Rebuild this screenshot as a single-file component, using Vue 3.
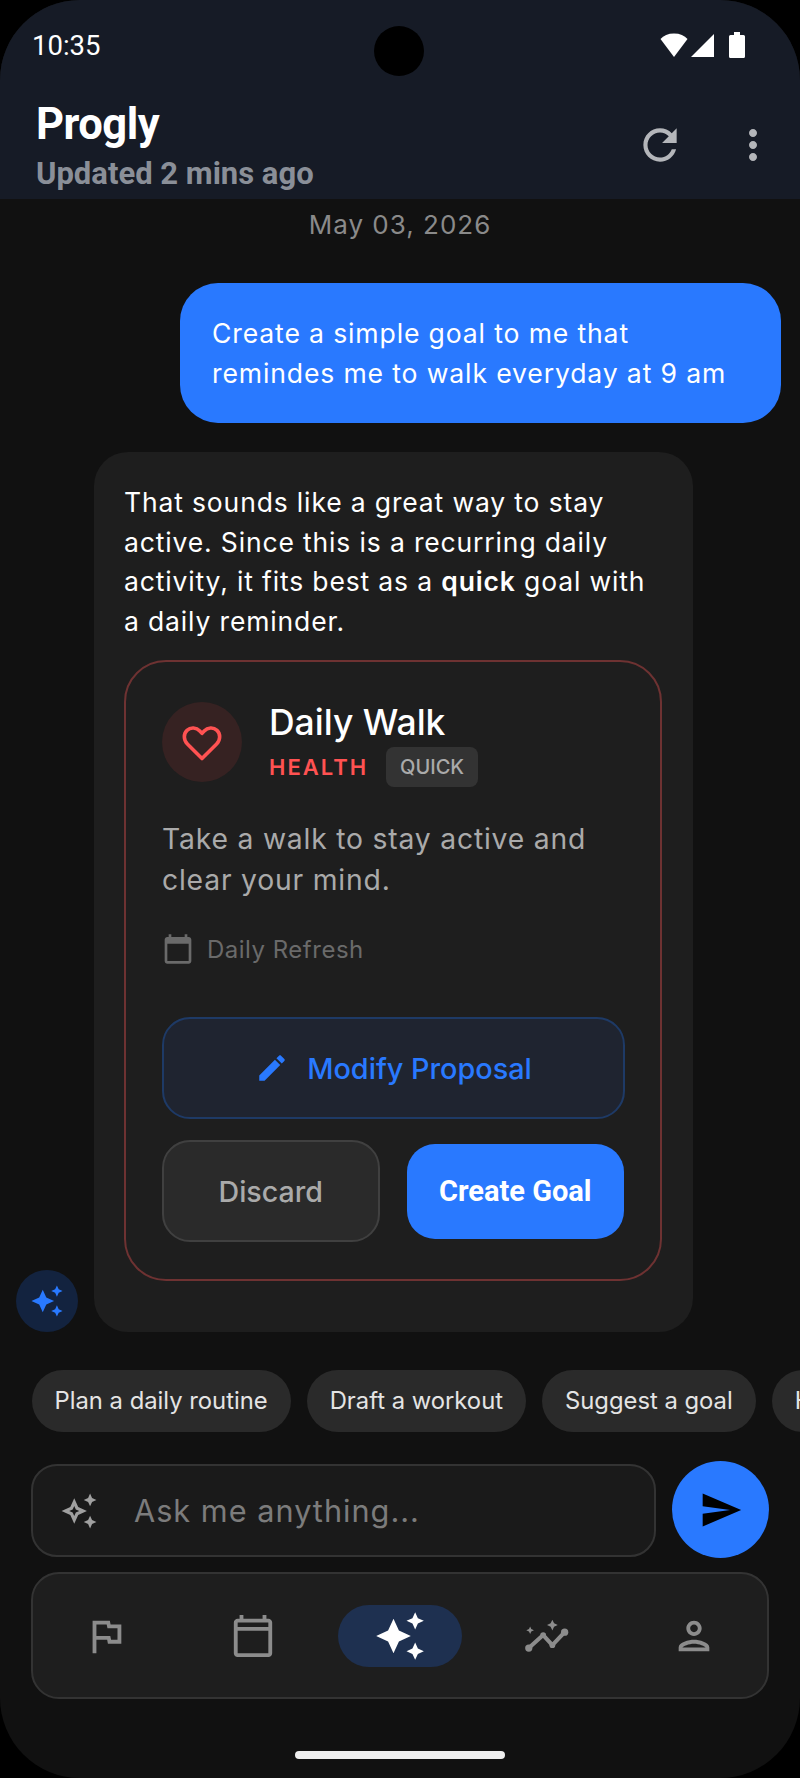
<script setup>
const chips = ['Plan a daily routine', 'Draft a workout', 'Suggest a goal', 'Help me focus']

const sparkle = 'M19 9l1.25-2.75L23 5l-2.75-1.25L19 1l-1.25 2.75L15 5l2.75 1.25L19 9zm-7.5.5L9 4 6.5 9.5 1 12l5.5 2.5L9 20l2.5-5.5L17 12l-5.5-2.5zM19 15l-1.25 2.75L15 19l2.75 1.25L19 23l1.25-2.75L23 19l-2.75-1.25L19 15z'
const sparkleOutline = 'M19 9l1.25-2.75L23 5l-2.75-1.25L19 1l-1.25 2.75L15 5l2.75 1.25zm0 6l-1.25 2.75L15 19l2.75 1.25L19 23l1.25-2.75L23 19l-2.75-1.25zm-7.5-5.5L9 4 6.5 9.5 1 12l5.5 2.5L9 20l2.5-5.5L17 12l-5.5-2.5zm-1.51 3.49L9 15.17l-.99-2.18L5.83 12l2.18-.99L9 8.83l.99 2.18 2.18.99-2.18.99z'
const calendar = 'M20 3h-1V1h-2v2H7V1H5v2H4c-1.1 0-2 .9-2 2v16c0 1.1.9 2 2 2h16c1.1 0 2-.9 2-2V5c0-1.1-.9-2-2-2zm0 18H4V8h16v13z'
const calendarBanded = 'M20 3h-1V1h-2v2H7V1H5v2H4c-1.1 0-2 .9-2 2v16c0 1.1.9 2 2 2h16c1.1 0 2-.9 2-2V5c0-1.1-.9-2-2-2zM4 5h16v2.300H4zM4 9.300h16V21H4z'
</script>

<template>
  <div class="phone">
    <header class="top">
      <div class="camera"></div>

      <div class="status">
        <span class="time">10:35</span>
        <div class="status-icons">
          <svg width="28" height="24" viewBox="0 0 28 24"><path d="M14 24 .5 6C3.500 2.500 8 .5 14 .5S24.500 2.500 27.500 6z" fill="#fff" /></svg>
          <svg width="24" height="24" viewBox="0 0 24 24"><path d="M24 1v23H1z" fill="#fff" /></svg>
          <svg class="battery" width="16" height="26" viewBox="0 0 16 26"><path d="M5 0h6v3h3.500a1.500 1.500 0 0 1 1.500 1.500v20a1.500 1.500 0 0 1-1.500 1.500h-13A1.500 1.500 0 0 1 0 24.500v-20A1.500 1.500 0 0 1 1.500 3H5z" fill="#fff" /></svg>
        </div>
      </div>

      <div class="appbar">
        <div class="titles">
          <h1>Progly</h1>
          <p>Updated 2 mins ago</p>
        </div>
        <svg class="refresh" width="50" height="50" viewBox="0 0 24 24"><path d="M17.650 6.350C16.200 4.900 14.210 4 12 4c-4.420 0-7.990 3.580-7.990 8s3.570 8 7.990 8c3.730 0 6.840-2.550 7.730-6h-2.080c-.82 2.330-3.040 4-5.650 4-3.310 0-6-2.690-6-6s2.690-6 6-6c1.660 0 3.140.69 4.220 1.780L13 11h7V4l-2.350 2.350z" /></svg>
        <svg class="more" width="48" height="48" viewBox="0 0 24 24"><path d="M12 8c1.100 0 2-.9 2-2s-.9-2-2-2-2 .9-2 2 .9 2 2 2zm0 2c-1.100 0-2 .9-2 2s.9 2 2 2 2-.9 2-2-.9-2-2-2zm0 6c-1.100 0-2 .9-2 2s.9 2 2 2 2-.9 2-2-.9-2-2-2z" /></svg>
      </div>
    </header>

    <main class="chat">
      <div class="date">May 03, 2026</div>

      <div class="user-bubble">Create a simple goal to me that remindes me to walk everyday at 9 am</div>

      <div class="ai-row">
        <div class="avatar">
          <svg width="34" height="34" viewBox="0 0 24 24"><path :d="sparkle" /></svg>
        </div>

        <div class="ai-bubble">
          <p class="ai-text">That sounds like a great way to stay active. Since this is a recurring daily activity, it fits best as a <b>quick</b> goal with a daily reminder.</p>

          <div class="proposal">
            <div class="proposal-head">
              <div class="heart">
                <svg width="48" height="48" viewBox="0 0 24 24"><path d="M12 20.300 4.700 13C2.700 11 2.700 7.900 4.500 6.200 6.300 4.500 9.200 4.700 10.900 6.500L12 7.700l1.100-1.200c1.700-1.800 4.600-2 6.400-.3 1.800 1.700 1.800 4.800-.2 6.800z" /></svg>
              </div>
              <div>
                <h2>Daily Walk</h2>
                <div class="tags">
                  <span class="category">HEALTH</span>
                  <span class="kind">QUICK</span>
                </div>
              </div>
            </div>

            <p class="desc">Take a walk to stay active and clear your mind.</p>

            <div class="refresh-row">
              <svg width="32" height="32" viewBox="0 0 24 24"><path :d="calendar" /></svg>
              <span>Daily Refresh</span>
            </div>

            <button class="modify">
              <svg width="34" height="34" viewBox="0 0 24 24"><path d="M3 17.250V21h3.750L17.810 9.940l-3.750-3.750L3 17.250zM20.710 7.040c.39-.39.39-1.020 0-1.410l-2.340-2.340c-.39-.39-1.020-.39-1.410 0l-1.830 1.830 3.750 3.750 1.830-1.830z" /></svg>
              Modify Proposal
            </button>

            <div class="actions">
              <button class="discard">Discard</button>
              <button class="create">Create Goal</button>
            </div>
          </div>
        </div>
      </div>
    </main>

    <div class="chips">
      <span v-for="chip in chips" :key="chip" class="chip">{{ chip }}</span>
    </div>

    <div class="composer">
      <div class="input">
        <svg width="38" height="38" viewBox="0 0 24 24"><path :d="sparkleOutline" /></svg>
        <span>Ask me anything...</span>
      </div>
      <button class="send">
        <svg width="44" height="44" viewBox="0 0 24 24"><path d="M2.010 21 23 12 2.010 3 2 10l15 2-15 2z" /></svg>
      </button>
    </div>

    <nav class="nav">
      <div class="nav-item">
        <svg width="46" height="46" viewBox="0 0 24 24"><path d="M14.400 6 14 4H5v17h2v-7h5.600l.4 2h7V6h-5.600zm3.600 8h-3.360l-.4-2H7V6h5.360l.4 2H18v6z" /></svg>
      </div>
      <div class="nav-item">
        <svg width="46" height="46" viewBox="0 0 24 24"><path :d="calendarBanded" fill-rule="evenodd" /></svg>
      </div>
      <div class="nav-item active">
        <svg width="52" height="52" viewBox="0 0 24 24"><path :d="sparkle" /></svg>
      </div>
      <div class="nav-item">
        <svg width="46" height="46" viewBox="0 0 24 24">
          <path class="graph-line" d="M2.500 18.300 10 11.500 14.800 16.800 21.200 10" />
          <circle cx="2.500" cy="18.300" r="1.900" />
          <circle cx="10" cy="11.500" r="1.500" />
          <circle cx="14.800" cy="16.800" r="1.500" />
          <circle cx="21.200" cy="10" r="1.900" />
          <path d="M14.800 3.500l.9 1.900 1.900.9-1.900.9-.9 1.900-.9-1.900-1.900-.9 1.900-.9zM3.200 7l.6 1.400 1.400.6-1.400.6-.6 1.400-.6-1.400L1.200 9l1.400-.6z" />
        </svg>
      </div>
      <div class="nav-item">
        <svg width="46" height="46" viewBox="0 0 24 24"><path d="M12 6c1.100 0 2 .9 2 2s-.9 2-2 2-2-.9-2-2 .9-2 2-2m0 10c2.700 0 5.800 1.290 6 2H6c.23-.72 3.310-2 6-2m0-12C9.790 4 8 5.790 8 8s1.790 4 4 4 4-1.790 4-4-1.790-4-4-4zm0 10c-2.670 0-8 1.340-8 4v2h16v-2c0-2.660-5.330-4-8-4z" /></svg>
      </div>
    </nav>

    <div class="home-bar"></div>
  </div>
</template>

<style>
html,
body {
  background: #000;
}
</style>

<style scoped>
.phone {
  position: relative;
  width: 800px;
  height: 1778px;
  display: flex;
  flex-direction: column;
  background: #111111;
  border-radius: 80px;
  overflow: hidden;
  font-family: Inter, "Noto Sans", sans-serif;
  color: #fff;
}

.top {
  height: 199px;
  flex-shrink: 0;
  background: #161b26;
  box-sizing: border-box;
  padding: 27px 32px 0;
}

.camera {
  position: absolute;
  left: 374px;
  top: 26px;
  width: 50px;
  height: 50px;
  border-radius: 50%;
  background: #000;
}

.status {
  display: flex;
  align-items: center;
  justify-content: space-between;
  height: 36px;
  padding-right: 23px;
}

.time {
  font-family: Roboto, sans-serif;
  font-size: 27.500px;
}

.status-icons {
  display: flex;
  align-items: center;
  gap: 2px;
}

.battery {
  margin-left: 13px;
}

.appbar {
  display: flex;
  align-items: center;
  margin-top: 33px;
  padding-left: 4px;
}

.titles {
  flex: 1;
}

.titles h1 {
  margin: 0;
  font-family: Roboto, sans-serif;
  font-size: 43.500px;
  line-height: 58px;
  font-weight: 700;
  letter-spacing: -0.5px;
}

.titles p {
  margin: 1px 0 0;
  font-family: Roboto, sans-serif;
  font-size: 31px;
  line-height: 38px;
  font-weight: 700;
  color: #8a8f98;
}

.refresh {
  fill: #b4b6ba;
  margin-right: 44px;
}

.more {
  fill: #b4b6ba;
  margin-right: -9px;
}

.chat {
  flex: 1;
  min-height: 0;
  display: flex;
  flex-direction: column;
}

.date {
  margin-top: 11px;
  text-align: center;
  font-size: 26px;
  line-height: 30px;
  letter-spacing: 1px;
  color: #8a8a8a;
}

.user-bubble {
  align-self: flex-end;
  width: 601px;
  box-sizing: border-box;
  margin: 43px 19px 0 0;
  padding: 30px 40px 30px 32px;
  background: #2979ff;
  border-radius: 38px;
  font-size: 26.600px;
  line-height: 40px;
  letter-spacing: 0.85px;
}

.ai-row {
  display: flex;
  align-items: flex-end;
  margin-top: 29px;
  padding-left: 16px;
}

.avatar {
  width: 62px;
  height: 62px;
  display: flex;
  align-items: center;
  justify-content: center;
  border-radius: 50%;
  background: #13233f;
  fill: #2979ff;
}

.ai-bubble {
  width: 599px;
  height: 880px;
  box-sizing: border-box;
  margin-left: 16px;
  padding: 31px 30px 0;
  background: #1e1e1e;
  border-radius: 34px;
}

.ai-text {
  margin: 0;
  font-size: 26.500px;
  line-height: 39.500px;
  letter-spacing: 0.85px;
}

.ai-text b {
  font-weight: 600;
}

.proposal {
  width: 538px;
  height: 621px;
  box-sizing: border-box;
  margin-top: 19px;
  padding: 39px 36px 0;
  border: 2px solid #6e3232;
  border-radius: 42px;
}

.proposal-head {
  display: flex;
  align-items: center;
  gap: 27px;
}

.heart {
  width: 80px;
  height: 80px;
  display: flex;
  align-items: center;
  justify-content: center;
  margin-bottom: 4px;
  border-radius: 50%;
  background: #362222;
}

.heart path {
  fill: none;
  stroke: #ff5252;
  stroke-width: 1.800;
  stroke-linejoin: round;
}

.proposal-head h2 {
  margin: 0;
  font-size: 35.500px;
  line-height: 44px;
  font-weight: 500;
}

.tags {
  display: flex;
  align-items: center;
  gap: 18px;
  margin-top: 2px;
}

.category {
  font-size: 22px;
  font-weight: 600;
  letter-spacing: 2px;
  color: #ff5252;
}

.kind {
  padding: 0 14px;
  line-height: 40px;
  border-radius: 8px;
  background: #333333;
  font-size: 20px;
  font-weight: 500;
  color: #aaaaaa;
}

.desc {
  margin: 32px 0 0;
  font-size: 28.300px;
  line-height: 41px;
  letter-spacing: 0.8px;
  color: #aaaaaa;
}

.refresh-row {
  display: flex;
  align-items: center;
  gap: 13px;
  margin-top: 32px;
  font-size: 24px;
  letter-spacing: 0.5px;
  color: #6a6a6a;
  fill: #6a6a6a;
}

.proposal button {
  font-family: inherit;
  border-radius: 28px;
  cursor: pointer;
}

.modify {
  width: 463px;
  height: 102px;
  display: flex;
  align-items: center;
  justify-content: center;
  gap: 18px;
  margin-top: 52px;
  background: #1f2430;
  border: 2px solid #1e3a66;
  font-size: 28.800px;
  font-weight: 500;
  color: #2979ff;
  fill: #2979ff;
}

.actions {
  display: flex;
  align-items: center;
  gap: 27px;
  margin-top: 21px;
}

.discard {
  width: 218px;
  height: 102px;
  background: #2a2a2a;
  border: 2px solid #404040;
  font-size: 28.600px;
  font-weight: 500;
  color: #aaaaaa;
}

.proposal .create {
  width: 218px;
  height: 95px;
  background: #2979ff;
  border: none;
  font-family: Roboto, sans-serif;
  font-size: 29px;
  font-weight: 700;
  color: #fff;
}

.chips {
  display: flex;
  flex-shrink: 0;
  gap: 16px;
  margin-top: 38px;
  padding-left: 31.500px;
  white-space: nowrap;
}

.chip {
  flex-shrink: 0;
  padding: 0 23px;
  line-height: 62px;
  border-radius: 31px;
  background: #2a2a2a;
  font-size: 23.800px;
  color: #e4e4e4;
}

.composer {
  display: flex;
  flex-shrink: 0;
  align-items: center;
  gap: 16px;
  margin-top: 29px;
  padding: 0 31px;
}

.input {
  width: 625px;
  height: 93px;
  box-sizing: border-box;
  display: flex;
  align-items: center;
  gap: 36px;
  margin-top: 2px;
  padding-left: 27px;
  background: #1a1a1a;
  border: 2px solid #333333;
  border-radius: 26px;
  font-size: 30.700px;
  letter-spacing: 1px;
  color: #7c7c7c;
  fill: #a0a0a0;
}

.send {
  width: 97px;
  height: 97px;
  display: flex;
  align-items: center;
  justify-content: center;
  padding: 0;
  border: none;
  border-radius: 50%;
  background: #2979ff;
  fill: #000;
}

.nav {
  width: 738px;
  height: 127px;
  box-sizing: border-box;
  display: grid;
  grid-template-columns: repeat(5, 1fr);
  align-items: center;
  justify-items: center;
  flex-shrink: 0;
  margin: 14px 0 0 31px;
  background: #1e1e1e;
  border: 2px solid #333333;
  border-radius: 28px;
  fill: #8c8c8c;
}

.nav-item {
  width: 124px;
  height: 62px;
  display: flex;
  align-items: center;
  justify-content: center;
  border-radius: 31px;
}

.nav-item.active {
  background: #1e3050;
  fill: #fff;
}

.graph-line {
  fill: none;
  stroke: #8c8c8c;
  stroke-width: 2.100;
  stroke-linecap: round;
  stroke-linejoin: round;
}

.home-bar {
  width: 210px;
  height: 8px;
  flex-shrink: 0;
  margin: 52px auto 19px;
  border-radius: 4px;
  background: #eeeeee;
}
</style>
